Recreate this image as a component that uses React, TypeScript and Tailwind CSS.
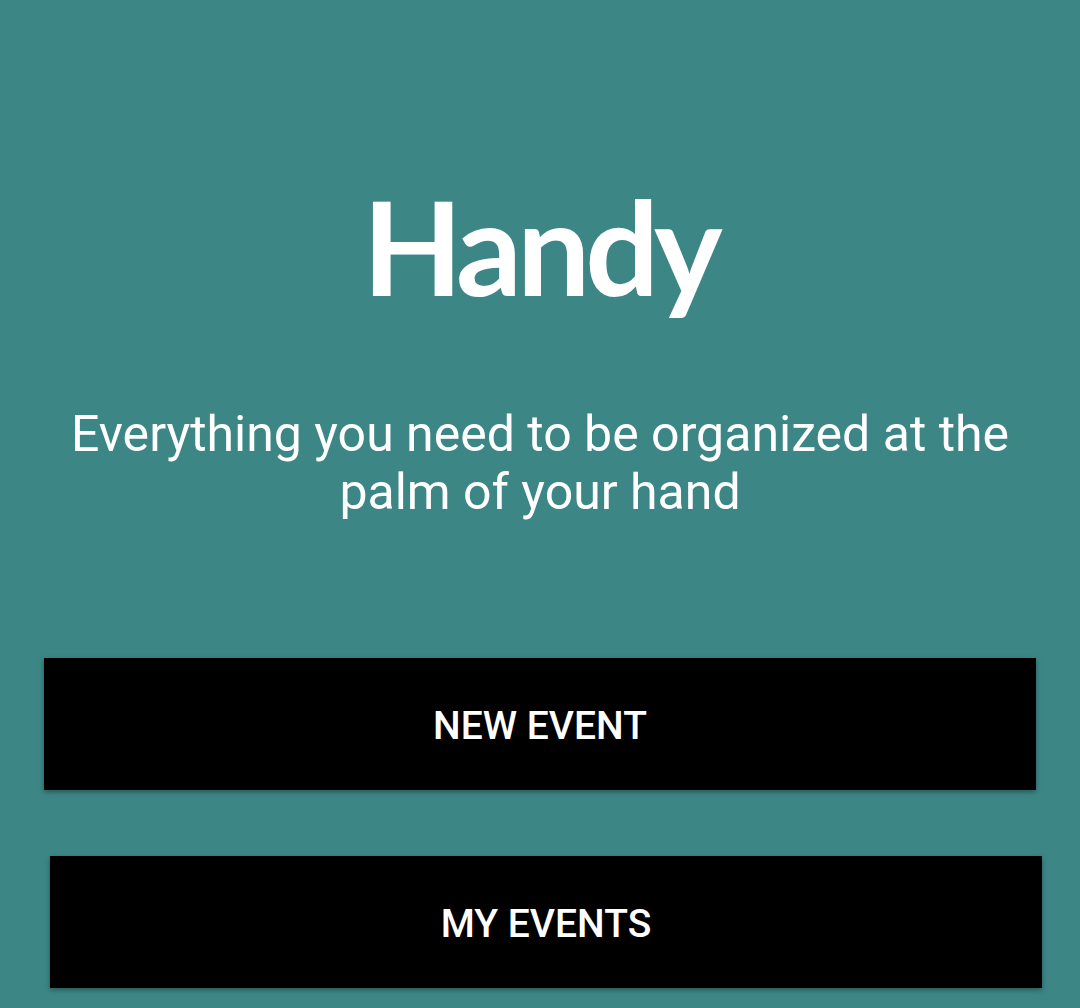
export default function App() {
  return (
    <div className="min-h-[1008px] w-full bg-[#3d8686] flex flex-col items-center text-white">
      <h1
        className="mt-[179px] text-[130px] leading-[135px] font-bold tracking-[-5px]"
        style={{ fontFamily: 'Lato, "Open Sans", sans-serif' }}
      >
        Handy
      </h1>
      <p
        className="mt-[91px] px-[30px] text-center text-[50px] leading-[58px]"
        style={{ fontFamily: 'Roboto, "Liberation Sans", sans-serif' }}
      >
        Everything you need to be organized at the palm of your hand
      </p>
      <div className="w-full flex flex-col" style={{ fontFamily: 'Roboto, "Liberation Sans", sans-serif' }}>
        <button className="mt-[137px] ml-[44px] w-[992px] h-[132px] pt-[4px] bg-black text-white text-[39px] font-medium shadow-[0_2px_5px_rgba(0,0,0,0.35)]">
          NEW EVENT
        </button>
        <button className="mt-[66px] ml-[50px] w-[992px] h-[132px] pt-[4px] bg-black text-white text-[39px] font-medium shadow-[0_2px_5px_rgba(0,0,0,0.35)]">
          MY EVENTS
        </button>
      </div>
    </div>
  );
}
